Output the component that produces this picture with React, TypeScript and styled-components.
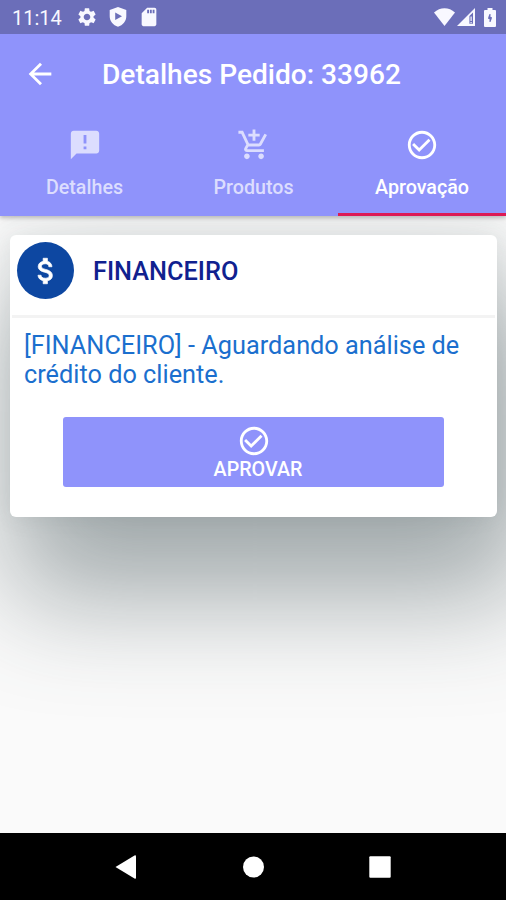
import React from "react";
import styled, { createGlobalStyle } from "styled-components";
import {
  MdAddShoppingCart,
  MdAnnouncement,
  MdArrowBack,
  MdAttachMoney,
  MdCheckCircleOutline,
  MdSdCard,
  MdSettings,
} from "react-icons/md";

const GlobalStyle = createGlobalStyle`
  *, *::before, *::after { box-sizing: border-box; }
  body { margin: 0; font-family: Roboto, sans-serif; }
  svg { display: block; flex: none; }
`;

const Screen = styled.div`
  display: flex;
  flex-direction: column;
  width: 506px;
  height: 900px;
  overflow: hidden;
  background: #fafafa;
`;

const StatusBar = styled.div`
  position: relative;
  z-index: 2;
  display: flex;
  align-items: center;
  justify-content: space-between;
  height: 34px;
  padding: 0 10px 0 12px;
  background: #6b6eb9;
  color: #f8f8ff;
`;

const StatusGroup = styled.div<{ $gap: number }>`
  display: flex;
  align-items: center;
  gap: ${({ $gap }) => $gap}px;
`;

const Clock = styled.span`
  width: 53px;
  font-size: 20px;
  line-height: 34px;
  padding-top: 2px;
`;

const Header = styled.header`
  position: relative;
  z-index: 1;
  height: 182px;
  background: #8f93fb;
  color: #fff;
  box-shadow: 0 2px 4px rgba(0, 0, 0, 0.22), 0 4px 14px rgba(0, 0, 0, 0.04);
`;

const Toolbar = styled.div`
  display: flex;
  align-items: center;
  height: 82px;
  padding-left: 23px;
`;

const BackButton = styled.button`
  display: flex;
  width: 79px;
  padding: 0 0 2px;
  border: 0;
  background: none;
  color: inherit;
`;

const Title = styled.h1`
  margin: 0;
  font-size: 28.1px;
  font-weight: 500;
  line-height: 32px;
  white-space: nowrap;
`;

const Tabs = styled.nav`
  display: grid;
  grid-template-columns: 169px 169px 168px;
  height: 100px;
`;

const Tab = styled.div<{ $active?: boolean }>`
  display: flex;
  flex-direction: column;
  align-items: center;
  gap: 14px;
  padding-top: 12px;
  border-bottom: 3px solid ${({ $active }) => ($active ? "#dc1a55" : "transparent")};
  color: ${({ $active }) => ($active ? "#fff" : "#dcddfe")};
  font-size: 19.7px;
  font-weight: 500;
  line-height: 24px;
`;

const Content = styled.main`
  flex: 1;
  padding: 19px 9px 0 10px;
  overflow: hidden;
`;

const Card = styled.section`
  height: 282px;
  border-radius: 6px;
  background: #fff;
  box-shadow: 16px 66px 110px 14px rgba(62, 78, 82, 0.47), 0 0 24px rgba(62, 78, 82, 0.1);
`;

const CardHeader = styled.div`
  display: flex;
  align-items: center;
  gap: 19px;
  height: 83px;
  margin: 0 2px;
  padding: 0 0 9px 5px;
  border-bottom: 3px solid #f3f3f3;
`;

const Avatar = styled.div`
  display: flex;
  align-items: center;
  justify-content: center;
  width: 57px;
  height: 57px;
  border-radius: 50%;
  background: #0d47a1;
  color: #fff;

  svg path:last-child {
    stroke: currentColor;
    stroke-width: 0.5px;
  }
`;

const CardTitle = styled.h2`
  margin: 2px 0 0;
  color: #10218f;
  font-size: 25.3px;
  font-weight: 500;
  line-height: 30px;
`;

const Message = styled.p`
  margin: 13px 14px 28px;
  color: #1b6fce;
  font-size: 25.3px;
  line-height: 29px;
`;

const ApproveButton = styled.button`
  display: flex;
  flex-direction: column;
  align-items: center;
  width: 381px;
  height: 70px;
  margin-left: 53px;
  padding: 7px 0 0;
  border: 0;
  border-radius: 3px;
  background: #8f93fb;
  color: #fff;
  font-family: inherit;
  font-size: 19.7px;
  font-weight: 500;
  line-height: 23px;
`;

const ApproveLabel = styled.span`
  padding-left: 9px;
`;

const NavigationBar = styled.div`
  display: grid;
  grid-template-columns: repeat(3, 127px);
  justify-content: center;
  justify-items: center;
  align-items: center;
  height: 67px;
  background: #000;
`;

const ShieldIcon = () => (
  <svg width="18" height="20" viewBox="0 0 18 20">
    <path fill="currentColor" fillRule="evenodd" d="M9 0 17.3 3v6.2c0 5-3.4 8.8-8.3 10.6C4.1 18 .7 14.2.7 9.2V3ZM6.2 5.6v7.4L13 9.3Z" />
  </svg>
);

const WifiIcon = () => (
  <svg width="21" height="18" viewBox="0 0 21 18">
    <path fill="currentColor" d="M0 4.500C6-1.300 15-1.300 21 4.500L10.500 18Z" />
  </svg>
);

const SignalIcon = () => (
  <svg width="18" height="18" viewBox="0 0 18 18">
    <path fill="currentColor" fillRule="evenodd" d="M18 0v18H0ZM12.400 8v7.800h3.600V4.600Z" />
    <path fill="currentColor" d="M13.500 8.500h1.200v4.500h-1.200ZM13.500 14h1.200v1.300h-1.200Z" />
  </svg>
);

const BatteryIcon = () => (
  <svg width="12" height="19" viewBox="0 0 12 19">
    <path fill="currentColor" fillRule="evenodd" d="M3.500 0h5v2H11q1 0 1 1v15q0 1-1 1H1q-1 0-1-1V3q0-1 1-1h2.500ZM5.500 6 4.200 9.500v1.600h1.300V14h1l1.300-3.500V9H6.500V6Z" />
  </svg>
);

const BackTriangle = () => (
  <svg width="22" height="24" viewBox="0 0 22 24">
    <path fill="#fff" d="M.5 12 19.500.5q1.500-.8 1.500 1v21q0 1.800-1.500 1Z" />
  </svg>
);

const HomeCircle = () => (
  <svg width="22" height="22" viewBox="0 0 22 22">
    <circle cx="11.500" cy="11" r="10.500" fill="#fff" />
  </svg>
);

const RecentSquare = () => (
  <svg width="22" height="22" viewBox="0 0 22 22">
    <rect x=".3" y=".3" width="21.400" height="21.400" rx="1" fill="#fff" />
  </svg>
);

export default function App() {
  return (
    <>
      <GlobalStyle />
      <Screen>
        <StatusBar>
          <StatusGroup $gap={11}>
            <Clock>11:14</Clock>
            <MdSettings size={22} />
            <ShieldIcon />
            <MdSdCard size={22} />
          </StatusGroup>
          <StatusGroup $gap={2}>
            <WifiIcon />
            <StatusGroup $gap={9}>
              <SignalIcon />
              <BatteryIcon />
            </StatusGroup>
          </StatusGroup>
        </StatusBar>
        <Header>
          <Toolbar>
            <BackButton aria-label="Voltar">
              <MdArrowBack size={34} />
            </BackButton>
            <Title>Detalhes Pedido: 33962</Title>
          </Toolbar>
          <Tabs>
            <Tab>
              <MdAnnouncement size={34} />
              Detalhes
            </Tab>
            <Tab>
              <MdAddShoppingCart size={34} />
              Produtos
            </Tab>
            <Tab $active>
              <MdCheckCircleOutline size={34} />
              Aprovação
            </Tab>
          </Tabs>
        </Header>
        <Content>
          <Card>
            <CardHeader>
              <Avatar>
                <MdAttachMoney size={34} />
              </Avatar>
              <CardTitle>FINANCEIRO</CardTitle>
            </CardHeader>
            <Message>[FINANCEIRO] - Aguardando análise de crédito do cliente.</Message>
            <ApproveButton>
              <MdCheckCircleOutline size={34} />
              <ApproveLabel>APROVAR</ApproveLabel>
            </ApproveButton>
          </Card>
        </Content>
        <NavigationBar>
          <BackTriangle />
          <HomeCircle />
          <RecentSquare />
        </NavigationBar>
      </Screen>
    </>
  );
}
